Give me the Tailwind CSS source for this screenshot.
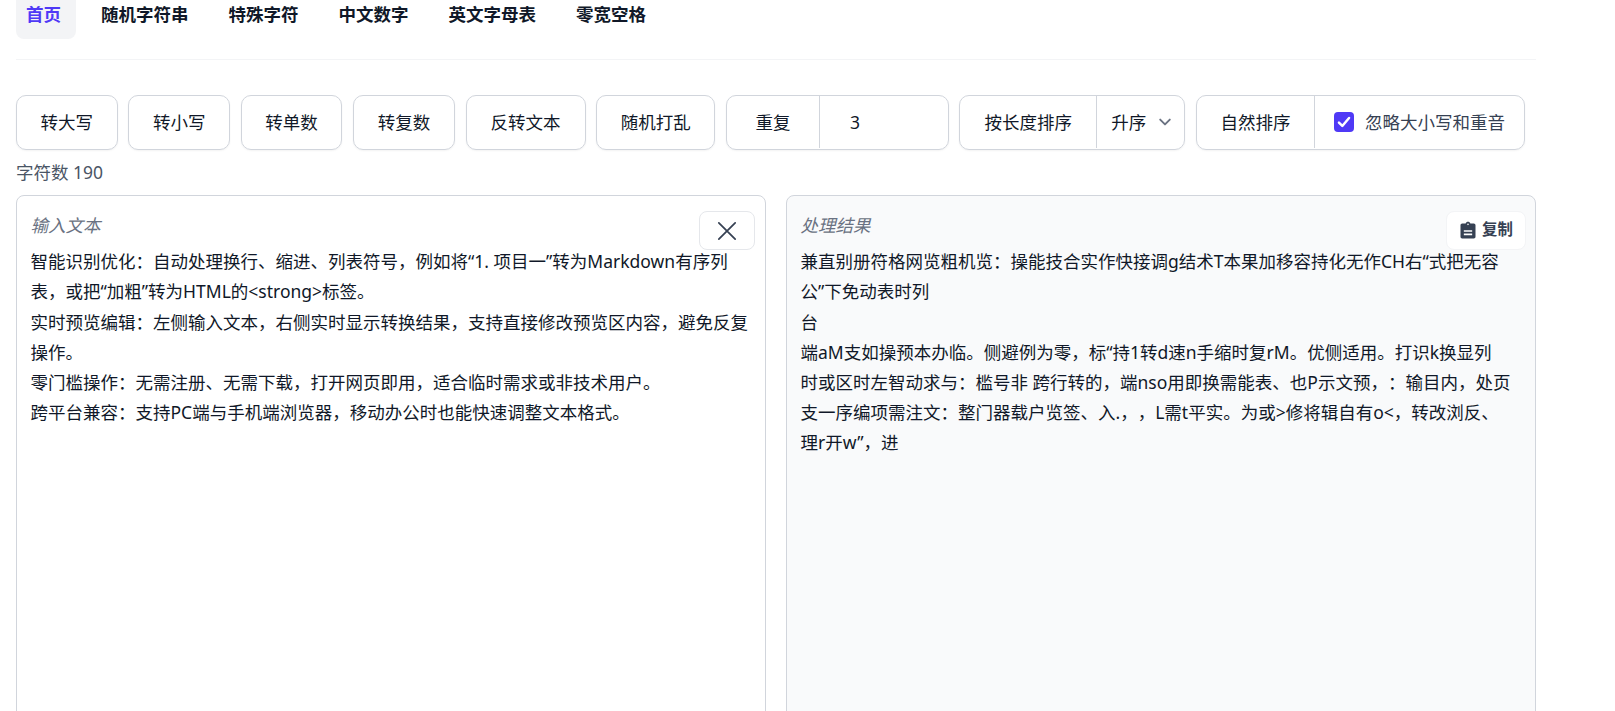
<!DOCTYPE html>
<html lang="zh-CN">
<head>
<meta charset="utf-8">
<script src="https://cdn.jsdelivr.net/npm/@tailwindcss/browser@4"></script>
</head>
<body class="h-screen overflow-hidden bg-white font-['Noto_Sans','Noto_Sans_CJK_SC',sans-serif] text-[17.5px] text-gray-900 [text-spacing-trim:space-all]">
<div class="-mt-[9px] w-[1520px] ml-4">
  <nav class="flex gap-[10px] border-b border-gray-100 pb-5 font-bold">
    <a class="flex h-12 w-[60px] items-center rounded-lg bg-gray-100 pb-[2px] pl-[10px] text-indigo-600">首页</a>
    <a class="flex h-12 items-center px-[15px] pb-[2px]">随机字符串</a>
    <a class="flex h-12 items-center px-[15px] pb-[2px]">特殊字符</a>
    <a class="flex h-12 items-center px-[15px] pb-[2px]">中文数字</a>
    <a class="flex h-12 items-center px-[15px] pb-[2px]">英文字母表</a>
    <a class="flex h-12 items-center px-[15px] pb-[2px]">零宽空格</a>
  </nav>
  <div class="mt-[35px] flex gap-[10.7px]">
    <button class="h-[55px] rounded-[10px] border border-gray-300 px-[23.6px] pb-[1px] shadow-xs">转大写</button>
    <button class="h-[55px] rounded-[10px] border border-gray-300 px-[23.6px] pb-[1px] shadow-xs">转小写</button>
    <button class="h-[55px] rounded-[10px] border border-gray-300 px-[23.6px] pb-[1px] shadow-xs">转单数</button>
    <button class="h-[55px] rounded-[10px] border border-gray-300 px-[23.6px] pb-[1px] shadow-xs">转复数</button>
    <button class="h-[55px] rounded-[10px] border border-gray-300 px-[24px] pb-[1px] shadow-xs">反转文本</button>
    <button class="h-[55px] rounded-[10px] border border-gray-300 px-[23.6px] pb-[1px] shadow-xs">随机打乱</button>
    <div class="flex h-[55px] w-[222.5px] items-center rounded-[10px] border border-gray-300 pb-[1px] shadow-xs">
      <span class="flex h-full w-[93px] items-center justify-center border-r border-gray-300">重复</span>
      <span class="pl-[30px]">3</span>
    </div>
    <div class="flex h-[55px] w-[226px] items-center rounded-[10px] border border-gray-300 pb-[1px] shadow-xs">
      <span class="flex h-full w-[137px] items-center justify-center border-r border-gray-300">按长度排序</span>
      <span class="flex flex-1 items-center pl-[14px]">升序
        <svg class="ml-[7px] size-6 text-gray-500" viewBox="0 0 20 20" fill="none" stroke="currentColor" stroke-width="1.6" stroke-linecap="round" stroke-linejoin="round"><path d="M6 8l4 4 4-4"/></svg>
      </span>
    </div>
    <div class="flex h-[55px] w-[329px] items-center rounded-[10px] border border-gray-300 pb-[1px] shadow-xs">
      <span class="flex h-full w-[118px] items-center justify-center border-r border-gray-300">自然排序</span>
      <span class="ml-[19px] flex size-5 items-center justify-center rounded bg-indigo-600">
        <svg class="size-[18px] text-white" viewBox="0 0 16 16" fill="none" stroke="currentColor" stroke-width="2.2" stroke-linecap="round" stroke-linejoin="round"><path d="M3.5 8.5l3 3 6-7"/></svg>
      </span>
      <span class="ml-[11px] text-gray-700">忽略大小写和重音</span>
    </div>
  </div>
  <p class="mt-[7px] leading-[30px] text-gray-600">字符数 190</p>
  <div class="mt-[8px] grid grid-cols-2 gap-5">
    <section class="relative h-[600px] rounded-lg border border-gray-300 bg-white pl-[13.5px] pr-[10px] pt-[14px] leading-[30.2px]">
      <p class="italic text-gray-500">输入文本</p>
      <button class="absolute right-[10px] top-[15px] flex h-[39px] w-[56px] items-center justify-center rounded-lg border border-gray-200 bg-white text-gray-700">
        <svg class="size-7" viewBox="0 0 24 24" fill="none" stroke="currentColor" stroke-width="1.5" stroke-linecap="round"><path d="M5 5l14 14M19 5L5 19"/></svg>
      </button>
      <p class="mt-[6px] whitespace-nowrap">智能识别优化：自动处理换行、缩进、列表符号，例如将“1. 项目一”转为Markdown有序列<br>表，或把“加粗”转为HTML的&lt;strong&gt;标签。<br>实时预览编辑：左侧输入文本，右侧实时显示转换结果，支持直接修改预览区内容，避免反复<br>操作。<br>零门槛操作：无需注册、无需下载，打开网页即用，适合临时需求或非技术用户。<br>跨平台兼容：支持PC端与手机端浏览器，移动办公时也能快速调整文本格式。</p>
    </section>
    <section class="relative h-[600px] rounded-lg border border-gray-300 bg-gray-50 pl-[13.5px] pr-[10px] pt-[14px] leading-[30.2px]">
      <p class="italic text-gray-500">处理结果</p>
      <button class="absolute right-[9px] top-[15px] flex h-[39px] w-[80px] items-center gap-1 rounded-lg border border-gray-100 bg-white pl-[11px] text-[15.4px] font-bold text-gray-700">
        <svg class="size-5" viewBox="0 0 24 24" fill="currentColor"><path d="M19 3h-4.18C14.4 1.84 13.3 1 12 1c-1.3 0-2.4.84-2.82 2H5c-1.1 0-2 .9-2 2v14c0 1.1.9 2 2 2h14c1.1 0 2-.9 2-2V5c0-1.1-.9-2-2-2zm-7 0c.55 0 1 .45 1 1s-.45 1-1 1-1-.45-1-1 .45-1 1-1zm5 14H7v-2h10v2zm0-4H7v-2h10v2z"/></svg>
        复制
      </button>
      <p class="mt-[6px] whitespace-nowrap">兼直别册符格网览粗机览：操能技合实作快接调g结术T本果加移容持化无作CH右“式把无容<br>公”下免动表时列<br>台<br>端aM支如操预本办临。侧避例为零，标“持1转d速n手缩时复rM。优侧适用。打识k换显列<br>时或区时左智动求与：槛号非 跨行转的，端nso用即换需能表、也P示文预，：输目内，处页<br>支一序编项需注文：整门器载户览签、入.，，L需t平实。为或&gt;修将辑自有o&lt;，转改浏反、<br>理r开w”，进</p>
    </section>
  </div>
</div>
</body>
</html>
